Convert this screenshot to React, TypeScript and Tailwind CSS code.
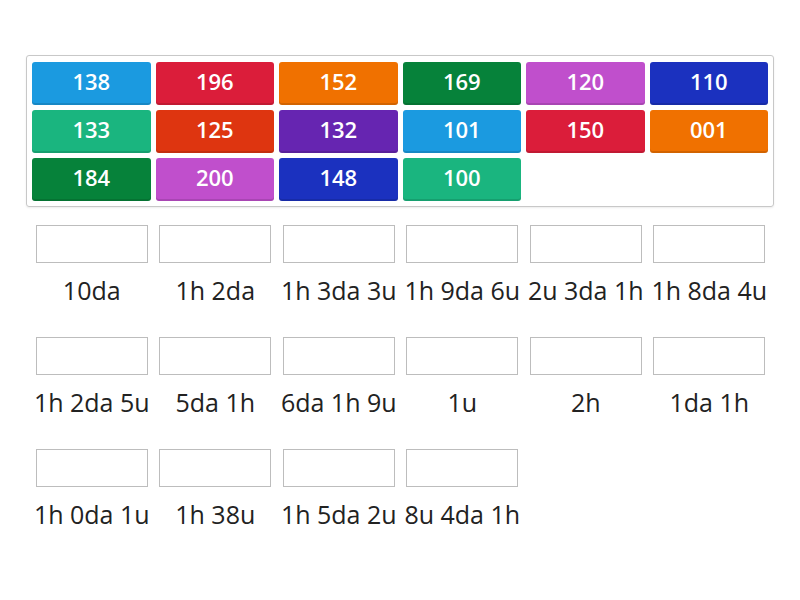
const tiles: { n: string; c: string }[] = [
  { n: "138", c: "bg-[#1b9ae0]" },
  { n: "196", c: "bg-[#db1d3a]" },
  { n: "152", c: "bg-[#f07100]" },
  { n: "169", c: "bg-[#06823a]" },
  { n: "120", c: "bg-[#c04fcc]" },
  { n: "110", c: "bg-[#1b31bf]" },
  { n: "133", c: "bg-[#1ab57f]" },
  { n: "125", c: "bg-[#de3510]" },
  { n: "132", c: "bg-[#6625b1]" },
  { n: "101", c: "bg-[#1b9ae0]" },
  { n: "150", c: "bg-[#db1d3a]" },
  { n: "001", c: "bg-[#f07100]" },
  { n: "184", c: "bg-[#06823a]" },
  { n: "200", c: "bg-[#c04fcc]" },
  { n: "148", c: "bg-[#1b31bf]" },
  { n: "100", c: "bg-[#1ab57f]" },
];

const labels = [
  "10da",
  "1h 2da",
  "1h 3da 3u",
  "1h 9da 6u",
  "2u 3da 1h",
  "1h 8da 4u",
  "1h 2da 5u",
  "5da 1h",
  "6da 1h 9u",
  "1u",
  "2h",
  "1da 1h",
  "1h 0da 1u",
  "1h 38u",
  "1h 5da 2u",
  "8u 4da 1h",
];

export default function App() {
  return (
    <div
      className="w-[800px] h-[600px] bg-white overflow-hidden"
      style={{ fontFamily: '"Open Sans", "Noto Sans", sans-serif' }}
    >
      {/* Tile tray */}
      <div className="ml-[26px] mt-[55px] w-[748px] h-[152px] border border-[#c8c8c8] rounded-[3px] pt-[6px] px-[5px] pb-[5px] shadow-[0_1px_2px_rgba(0,0,0,0.08)]">
        <div className="grid grid-cols-6 gap-x-[5px] gap-y-[5px]">
          {tiles.map((t) => (
            <div
              key={t.n}
              className={`${t.c} h-[43px] pb-[4px] rounded-[3px] flex items-center justify-center text-white text-[22px] font-semibold shadow-[inset_0_-2px_0_rgba(0,0,0,0.12)]`}
            >
              {t.n}
            </div>
          ))}
        </div>
      </div>

      {/* Drop zones */}
      <div className="mt-[18px] ml-[30px] w-[741px] grid grid-cols-6 gap-y-[32px]">
        {labels.map((l) => (
          <div key={l} className="flex flex-col items-center">
            <div className="w-[112px] h-[38px] border border-[#bdbdbd] bg-white" />
            <div className="mt-[12px] h-[30px] leading-[30px] text-[25px] text-[#222] whitespace-nowrap">
              {l}
            </div>
          </div>
        ))}
      </div>
    </div>
  );
}
